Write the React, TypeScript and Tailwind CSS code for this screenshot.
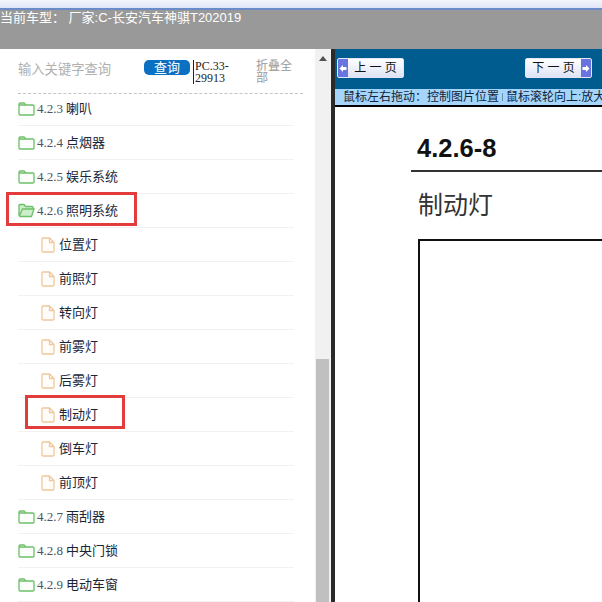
import React from "react";

const cjk = "font-['Liberation_Sans','Noto_Sans_CJK_SC',sans-serif]";

function Folder({ open }: { open?: boolean }) {
  return (
    <svg width="17" height="15" viewBox="0 0 17 15" fill="none" className="shrink-0">
      {open ? (
        <path d="M1 13V2.5C1 1.9 1.4 1.5 2 1.5H6L7.5 3.5H14C14.6 3.5 15 3.9 15 4.5V6H4.5L1.2 13.3M1.2 13.5H13.5L16 6H4.5" stroke="#6cc068" strokeWidth="1.3" fill="#cdeeca" />
      ) : (
        <path d="M1 3V13C1 13.6 1.4 14 2 14H15C15.6 14 16 13.6 16 13V5C16 4.4 15.6 4 15 4H1M1 3.5C1 2.5 1.5 2 2.2 2H6C6.8 2 7 3 7.5 4" stroke="#6cc068" strokeWidth="1.3" fill="#fbfefa" />
      )}
    </svg>
  );
}

function FileIcon() {
  return (
    <svg width="14" height="16" viewBox="0 0 14 16" fill="none" className="shrink-0">
      <path d="M1.5 1H8.5L13 5.5V14C13 14.6 12.6 15 12 15H2C1.4 15 1 14.6 1 14V2C1 1.4 1.2 1 1.5 1ZM8.5 1V5.5H13" stroke="#f0c89c" strokeWidth="1.3" fill="#fffdfa" />
    </svg>
  );
}

function Row({ num, name, open, mark }: { num: string; name: string; open?: boolean; mark?: boolean }) {
  return (
    <div className="relative flex h-[34px] w-[276px] shrink-0 items-center gap-[2px] border-b border-[#f1f1f1]">
      <Folder open={open} />
      <span className="text-[13px] text-[#4a5460] font-['Liberation_Serif',serif]">{num}</span>
      <span className={`ml-[1px] text-[13px] text-[#1a2638] ${cjk}`}>{name}</span>
      {mark && <div className="absolute left-[-12px] top-[-2px] h-[34px] w-[131px] border-[3px] border-[#e23c3c]" />}
    </div>
  );
}

function Leaf({ name, mark }: { name: string; mark?: boolean }) {
  return (
    <div className="relative flex h-[34px] w-[276px] shrink-0 items-center gap-[4px] border-b border-[#f1f1f1] pl-[23px]">
      <FileIcon />
      <span className={`text-[13px] text-[#1a2638] ${cjk}`}>{name}</span>
      {mark && <div className="absolute left-[7px] top-[-3px] h-[34px] w-[100px] border-[3px] border-[#e23c3c]" />}
    </div>
  );
}

function PageButton({ label, dir }: { label: string; dir: "l" | "r" }) {
  const arrow = (
    <div className="flex h-full w-[10px] items-center justify-center bg-[#6a74e0]">
      <svg width="8" height="9" viewBox="0 0 8 9">
        {dir === "l" ? <path d="M0.5 4.5L4 1V3H7.5V6H4V8Z" fill="#fff" /> : <path d="M7.5 4.5L4 1V3H0.5V6H4V8Z" fill="#fff" />}
      </svg>
    </div>
  );
  return (
    <div className="flex h-[20px] w-[67px] items-center overflow-hidden rounded-[2px] border border-[#dfe6f5] bg-gradient-to-b from-[#ffffff] to-[#dfe3f6]">
      {dir === "l" && arrow}
      <span className={`flex-1 text-center text-[12px] leading-none text-[#111] ${cjk}`}>{label}</span>
      {dir === "r" && arrow}
    </div>
  );
}

export default function App() {
  return (
    <div className={`flex h-[602px] w-[602px] flex-col overflow-hidden bg-white ${cjk}`}>
      <div className="h-[10px] shrink-0 border-b-[2px] border-[#6a8ac8] bg-gradient-to-b from-[#f4f6fc] to-[#dfe5f6]" />
      <div className="h-[39px] shrink-0 bg-[#999999] text-[13px] leading-[15px] text-white whitespace-nowrap">
        当前车型： 厂家:C-长安汽车神骐T202019
      </div>
      <div className="flex min-h-0 flex-1">
        <div className="flex w-[315px] shrink-0 flex-col overflow-hidden pl-[18px]">
          <div className="flex h-[45px] w-[285px] shrink-0 items-start border-b border-dashed border-[#c4c4c4] pt-[11px]">
            <span className="w-[126px] pt-[1px] text-[13.3px] leading-[17px] text-[#b0b0b0]">输入关键字查询</span>
            <span className="flex h-[15px] w-[46px] items-center justify-center rounded-[5px] bg-[#0b6fc2] text-[13px] text-white">查询</span>
            <span className="ml-[3px] w-[51px] border-l border-[#222] pl-[1px] text-[12px] leading-[12px] text-[#222] font-['Liberation_Serif',serif]">PC.33-<br />29913</span>
            <span className="ml-[12px] w-[40px] text-[12px] leading-[12px] text-[#999]">折叠全部</span>
          </div>
          <div className="-mt-[2px] flex flex-col">
            <Row num="4.2.3" name="喇叭" />
            <Row num="4.2.4" name="点烟器" />
            <Row num="4.2.5" name="娱乐系统" />
            <Row num="4.2.6" name="照明系统" open mark />
            <Leaf name="位置灯" />
            <Leaf name="前照灯" />
            <Leaf name="转向灯" />
            <Leaf name="前雾灯" />
            <Leaf name="后雾灯" />
            <Leaf name="制动灯" mark />
            <Leaf name="倒车灯" />
            <Leaf name="前顶灯" />
            <Row num="4.2.7" name="雨刮器" />
            <Row num="4.2.8" name="中央门锁" />
            <Row num="4.2.9" name="电动车窗" />
          </div>
        </div>
        <div className="flex w-[16px] shrink-0 flex-col items-center bg-[#f1f1f1]">
          <svg width="8" height="5" viewBox="0 0 8 5" className="mt-[7px] shrink-0">
            <path d="M4 0L8 5H0Z" fill="#505050" />
          </svg>
          <div className="flex-1" />
          <div className="mr-[2px] h-[243px] w-[13px] shrink-0 bg-[#c0c0c0]" />
        </div>
        <div className="w-[4px] shrink-0 bg-[#2a2a2a]" />
        <div className="flex min-w-0 flex-1 flex-col">
          <div className="flex h-[40px] shrink-0 items-center justify-between bg-[#005b8e] pl-[2px] pr-[10px] pb-[2px]">
            <PageButton label="上 一 页" dir="l" />
            <PageButton label="下 一 页" dir="r" />
          </div>
          <div className="flex h-[18px] shrink-0 overflow-hidden border-b-2 border-black bg-[#a6d5fb] pl-[8px] text-[12px] leading-[17px] text-[#10243a] whitespace-nowrap">
            <span>鼠标左右拖动：控制图片位置</span>
            <span className="mx-[3px] my-[4px] w-px shrink-0 bg-[#6b8fb0]" />
            <span>鼠标滚轮向上:放大</span>
          </div>
          <div className="flex-1 overflow-hidden pl-[76px]">
            <div className="ml-[6px] mt-[25px] text-[25.5px] font-bold leading-[32px] text-[#111]">4.2.6-8</div>
            <div className="mt-[6px] h-[2px] w-[200px] bg-[#333]" />
            <div className="ml-[7px] mt-[15px] text-[25px] leading-[36px] text-[#333]">制动灯</div>
            <div className="ml-[7px] mt-[16px] h-[400px] w-[300px] border-2 border-[#111]" />
          </div>
        </div>
      </div>
    </div>
  );
}
